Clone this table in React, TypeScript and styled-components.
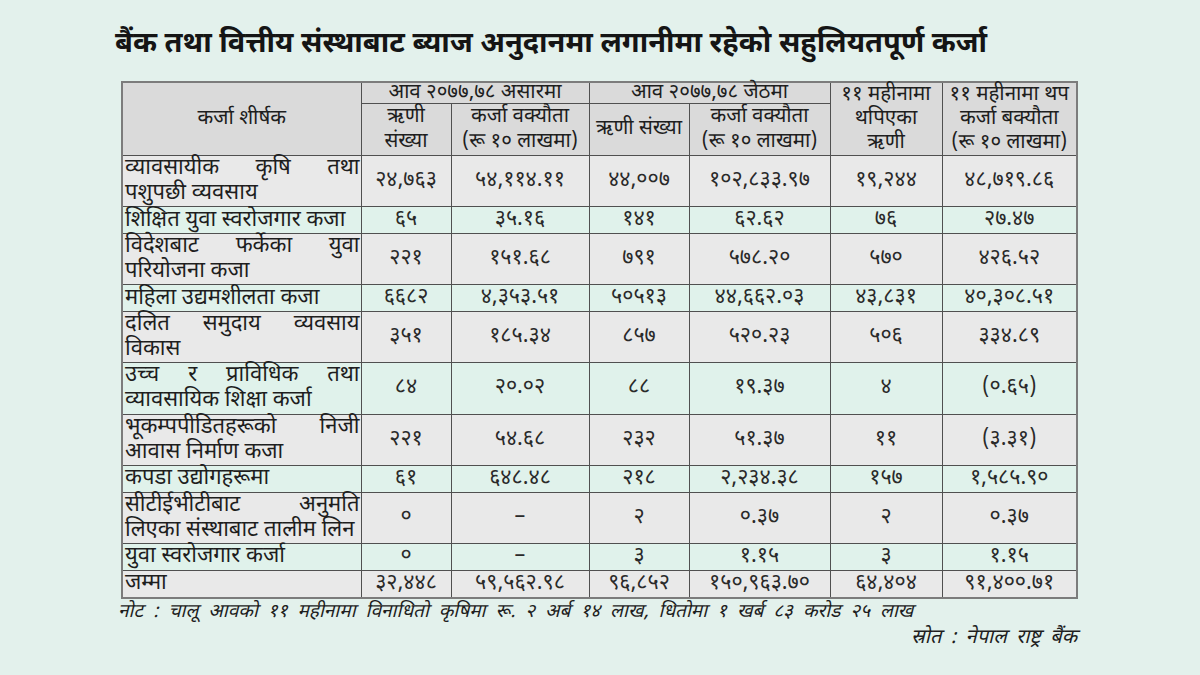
import React from 'react';
import styled, { createGlobalStyle } from 'styled-components';

type Row = {
  title: string[];
  values: string[];
  tone: 'gray' | 'mint';
};

const rows: Row[] = [
  { title: ['व्यावसायीक कृषि तथा', 'पशुपछी व्यवसाय'], values: ['२४,७६३', '५४,११४.११', '४४,००७', '१०२,८३३.९७', '१९,२४४', '४८,७१९.८६'], tone: 'gray' },
  { title: ['शिक्षित युवा स्वरोजगार कजा'], values: ['६५', '३५.१६', '१४१', '६२.६२', '७६', '२७.४७'], tone: 'mint' },
  { title: ['विदेशबाट फर्केका युवा', 'परियोजना कजा'], values: ['२२१', '१५१.६८', '७९१', '५७८.२०', '५७०', '४२६.५२'], tone: 'gray' },
  { title: ['महिला उद्यमशीलता कजा'], values: ['६६८२', '४,३५३.५१', '५०५१३', '४४,६६२.०३', '४३,८३१', '४०,३०८.५१'], tone: 'mint' },
  { title: ['दलित समुदाय व्यवसाय', 'विकास'], values: ['३५१', '१८५.३४', '८५७', '५२०.२३', '५०६', '३३४.८९'], tone: 'gray' },
  { title: ['उच्च र प्राविधिक तथा', 'व्यावसायिक शिक्षा कर्जा'], values: ['८४', '२०.०२', '८८', '१९.३७', '४', '(०.६५)'], tone: 'mint' },
  { title: ['भूकम्पपीडितहरूको निजी', 'आवास निर्माण कजा'], values: ['२२१', '५४.६८', '२३२', '५१.३७', '११', '(३.३१)'], tone: 'gray' },
  { title: ['कपडा उद्योगहरूमा'], values: ['६१', '६४८.४८', '२१८', '२,२३४.३८', '१५७', '१,५८५.९०'], tone: 'mint' },
  { title: ['सीटीईभीटीबाट अनुमति', 'लिएका संस्थाबाट तालीम लिन'], values: ['०', '–', '२', '०.३७', '२', '०.३७'], tone: 'gray' },
  { title: ['युवा स्वरोजगार कर्जा'], values: ['०', '–', '३', '१.१५', '३', '१.१५'], tone: 'mint' },
  { title: ['जम्मा'], values: ['३२,४४८', '५९,५६२.९८', '९६,८५२', '१५०,९६३.७०', '६४,४०४', '९१,४००.७१'], tone: 'gray' },
];

const colWidths = [239, 90, 138, 100, 141, 112, 135];

const GlobalStyle = createGlobalStyle`
  html, body {
    margin: 0;
    padding: 0;
    background: #e3f1ec;
  }
  body {
    font-family: 'Noto Sans Devanagari', 'Noto Sans', 'Liberation Sans', sans-serif;
    color: #1e1e1e;
  }
`;

const Page = styled.div`
  width: 1200px;
  height: 675px;
  box-sizing: border-box;
  padding: 21px 0 0 115px;
  display: flex;
  flex-direction: column;
`;

const Title = styled.h1`
  margin: 0 0 12px;
  font-size: 29px;
  font-weight: 700;
  line-height: 48px;
  color: #151515;
`;

const Table = styled.table`
  margin-left: 6px;
  width: 955px;
  table-layout: fixed;
  border-collapse: collapse;
  border: 2px solid #7c7c7c;
  font-size: 21px;
`;

const HeadCell = styled.th<{ $h?: number; $lh?: number }>`
  background: #dadada;
  border: 1px solid #505050;
  font-weight: 400;
  font-size: 20.5px;
  text-align: center;
  vertical-align: middle;
  line-height: ${(p) => p.$lh ?? 24}px;
  padding: 0 1px;
  height: ${(p) => (p.$h ? `${p.$h}px` : 'auto')};
`;

const BodyRow = styled.tr<{ $tone: 'gray' | 'mint'; $lines: number }>`
  background: ${(p) => (p.$tone === 'gray' ? '#e9e9e9' : '#e0f2eb')};
  height: ${(p) => (p.$lines > 1 ? 50 : 26)}px;
`;

const LabelCell = styled.td`
  border: 1px solid #505050;
  padding: 0 1px 0 2px;
  vertical-align: middle;
  font-size: 22px;
`;

const LabelLine = styled.div<{ $spread: boolean }>`
  line-height: 25px;
  white-space: nowrap;
  text-align: ${(p) => (p.$spread ? 'justify' : 'left')};
  text-align-last: ${(p) => (p.$spread ? 'justify' : 'left')};
`;

const NumCell = styled.td`
  border: 1px solid #505050;
  text-align: center;
  vertical-align: middle;
  line-height: 24px;
  font-size: 21.5px;
  color: #2a2a2a;
`;

const Note = styled.p`
  margin: 3px 0 0 3px;
  font-size: 19px;
  font-style: italic;
  line-height: 24px;
  word-spacing: 5px;
`;

const Source = styled.p`
  margin: 0;
  width: 962px;
  text-align: right;
  font-size: 20px;
  font-style: italic;
  line-height: 26px;
  word-spacing: 4px;
`;

const App: React.FC = () => {
  return (
    <>
      <GlobalStyle />
      <Page>
        <Title>बैंक तथा वित्तीय संस्थाबाट ब्याज अनुदानमा लगानीमा रहेको सहुलियतपूर्ण कर्जा</Title>
        <Table>
          <colgroup>
            {colWidths.map((w, idx) => (
              <col key={idx} style={{ width: w }} />
            ))}
          </colgroup>
          <thead>
            <tr>
              <HeadCell rowSpan={2}>कर्जा शीर्षक</HeadCell>
              <HeadCell colSpan={2} $h={20} $lh={20}>आव २०७७,७८ असारमा</HeadCell>
              <HeadCell colSpan={2} $lh={20}>आव २०७७,७८ जेठमा</HeadCell>
              <HeadCell rowSpan={2}>
                ११ महीनामा
                <br />
                थपिएका
                <br />
                ऋणी
              </HeadCell>
              <HeadCell rowSpan={2}>
                ११ महीनामा थप
                <br />
                कर्जा बक्यौता
                <br />
                (रू १० लाखमा)
              </HeadCell>
            </tr>
            <tr>
              <HeadCell $h={50} $lh={25}>
                ऋणी
                <br />
                संख्या
              </HeadCell>
              <HeadCell $lh={25}>
                कर्जा वक्यौता
                <br />
                (रू १० लाखमा)
              </HeadCell>
              <HeadCell $lh={25}>ऋणी संख्या</HeadCell>
              <HeadCell $lh={25}>
                कर्जा वक्यौता
                <br />
                (रू १० लाखमा)
              </HeadCell>
            </tr>
          </thead>
          <tbody>
            {rows.map((row, idx) => (
              <BodyRow key={idx} $tone={row.tone} $lines={row.title.length}>
                <LabelCell>
                  {row.title.map((line, li) => (
                    <LabelLine key={li} $spread={row.title.length > 1 && li === 0}>
                      {line}
                    </LabelLine>
                  ))}
                </LabelCell>
                {row.values.map((v, i) => (
                  <NumCell key={i}>{v}</NumCell>
                ))}
              </BodyRow>
            ))}
          </tbody>
        </Table>
        <Note>नोट : चालू आवको ११ महीनामा विनाधितो कृषिमा रू. २ अर्ब १४ लाख, धितोमा १ खर्ब ८३ करोड २५ लाख</Note>
        <Source>स्रोत : नेपाल राष्ट्र बैंक</Source>
      </Page>
    </>
  );
};

export default App;
